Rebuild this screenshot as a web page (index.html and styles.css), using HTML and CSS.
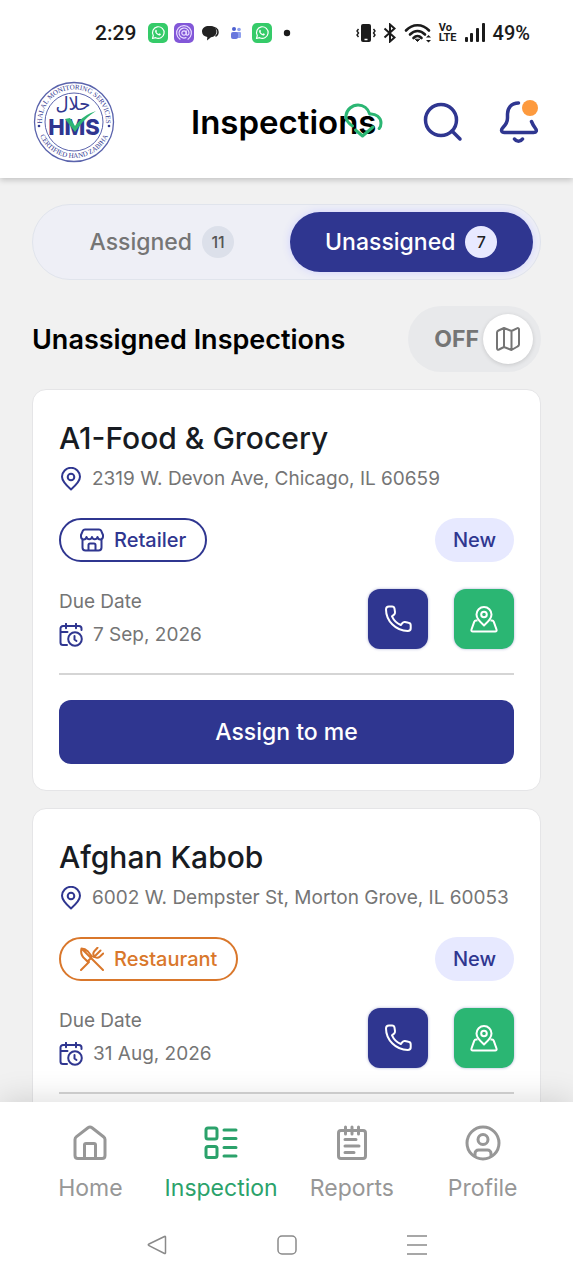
FILE: index.html
```html
<!DOCTYPE html>
<html lang="en">

<head>
    <meta charset="UTF-8" />
    <meta name="viewport" content="width=device-width, initial-scale=1.0" />
    <title>Inspections</title>
    <link rel="stylesheet" href="styles.css">
</head>

<body>
    <!-- Shared icons -->
    <svg class="sprite" aria-hidden="true">
        <symbol id="whatsapp" viewBox="0 0 20 20">
            <rect width="20" height="20" rx="5" fill="#35cb69" />
            <path d="M4.5 15.5l.8-3a5.8 5.8 0 1 1 2.3 2.2z" fill="none" stroke="#fff" stroke-width="1.2" stroke-linejoin="round" />
            <path d="M7.4 7.2c.5-.8 1-.6 1.2 0l.4 1-.6.8c.5 1 1.3 1.7 2.3 2.1l.8-.8 1.3.7c.2 1-.8 1.6-1.7 1.5-2.2-.4-4.1-2.6-4-4.2z" fill="#fff" />
        </symbol>
        <symbol id="pin" viewBox="0 0 24 24">
            <path d="M12 22.5C8 19 3 14.500 3 9.800a9 9 0 0 1 18 0c0 4.700-5 9.200-9 12.700z" />
            <circle cx="12" cy="10" r="3.3" />
        </symbol>
        <symbol id="calendar" viewBox="0 0 24 24">
            <path d="M8 22H4a2.500 2.500 0 0 1-2.500-2.500V5.500A2.500 2.500 0 0 1 4 3h16a2.500 2.500 0 0 1 2.500 2.500V7M1.500 9h7M7 .800v4.500M17 .800v4.500" />
            <circle cx="16" cy="16" r="6.8" />
            <path d="M15.500 13v3.500l2 1.500" />
        </symbol>
        <symbol id="phone" viewBox="0 0 28 28">
            <path d="M2 4.500C2 2.500 3 1.500 5 1.500h3c1.500 0 2.300.800 2.500 2.200l.500 3.500c.200 1.300-.300 2-1.200 2.700L8 11.300c1.800 4 4.800 7 8.800 8.700l1.500-1.800c.700-.900 1.500-1.300 2.700-1.100l3.500.600c1.400.200 2.200 1.100 2.200 2.500v3c0 1.900-1 2.800-3 2.800C12 26 2 16 2 4.500z" />
        </symbol>
        <symbol id="map-pin" viewBox="0 0 28 28">
            <path d="M14 20.500c-3.500-3.200-7.500-6.500-7.500-11a7.500 7.500 0 0 1 15 0c0 4.500-4 7.800-7.500 11z" />
            <circle cx="14" cy="9.5" r="2.8" />
            <path d="M7.500 15.500H6c-1 0-1.500.500-1.800 1.300l-2.700 7.700c-.400 1.200.100 2 1.300 2h22.400c1.200 0 1.700-.800 1.300-2l-2.700-7.700c-.300-.800-.800-1.300-1.800-1.300h-1.500" />
        </symbol>
    </svg>

    <div class="status-bar">
        <div class="status-group">
            <span class="clock">2:29</span>
            <svg class="status-icon" viewBox="0 0 20 20"><use href="#whatsapp" /></svg>
            <svg class="status-icon" viewBox="0 0 20 20">
                <rect width="20" height="20" rx="5" fill="#8257d8" />
                <g fill="none" stroke="#e8dcff" stroke-width="1.2" stroke-linecap="round">
                    <circle cx="10" cy="10" r="2.2" />
                    <path d="M12.200 7.800v3c0 2.200 2.800 1.600 2.800-1A5 5 0 1 0 12 14.600" />
                    <path d="M6 16.200a7.400 7.400 0 1 1 8 0" />
                </g>
            </svg>
            <svg class="status-icon" viewBox="0 0 20 20">
                <path d="M9 3c4.500 0 7.500 2 7.500 5.500S14 14 11 14.200L7 17.500l.300-3.500C4 13.500 2 11.500 2 8.500 2 5 5 3 9 3z" fill="#222" />
                <path d="M11 4c4 0 7 2 7 5 0 2-1 3.500-2.500 4.300" fill="none" stroke="#222" stroke-width="1.5" />
            </svg>
            <svg class="status-icon" viewBox="0 0 20 20">
                <circle cx="8" cy="6" r="2" fill="#4c5fd0" />
                <circle cx="13" cy="6.5" r="1.8" fill="#8fa0ee" />
                <rect x="10" y="9" width="5" height="6" rx="1" fill="#8fa0ee" />
                <rect x="5" y="9" width="7" height="7" rx="2" fill="#6877dd" />
            </svg>
            <svg class="status-icon" viewBox="0 0 20 20"><use href="#whatsapp" /></svg>
            <svg class="status-icon" viewBox="0 0 20 20"><circle cx="9" cy="10" r="3.2" fill="#1b1b1b" /></svg>
        </div>
        <div class="status-group status-system">
            <svg width="20" height="20" viewBox="0 0 20 20">
                <rect x="5" y="1" width="10" height="18" rx="2" fill="#1b1b1b" />
                <path d="M8.500 16.500h3" stroke="#fff" stroke-width="1.5" />
                <path d="M2.500 6L1 8l1.500 2L1 12l1.500 2M17.500 6L19 8l-1.500 2 1.500 2-1.500 2" fill="none" stroke="#1b1b1b" stroke-width="1.4" />
            </svg>
            <svg width="14" height="20" viewBox="0 0 14 20" fill="none" stroke="#1b1b1b" stroke-width="2">
                <path d="M1.500 5.500l10 9L7 18.500v-17l4.500 4-10 9" />
            </svg>
            <svg width="28" height="20" viewBox="0 0 28 20" fill="none" stroke="#1b1b1b" stroke-width="2.6" stroke-linecap="round">
                <path d="M2 7.500C8.500.500 18.500.500 25 7.500M6 11.500c4.500-4.600 10.500-4.600 15 0M9.500 15c2.500-2.600 5.500-2.600 8 0" />
                <path d="M11.500 16.500l2 2 2-2z" fill="#1b1b1b" stroke-width="1" />
                <path d="M22 14.500l2.500-2.500 2.500 2.500zM22 17l2.500 2.500 2.500-2.500z" fill="#1b1b1b" stroke="none" />
            </svg>
            <span class="volte"><span>Vo</span><span>LTE</span></span>
            <svg width="22" height="20" viewBox="0 0 22 20" fill="#1b1b1b">
                <rect x="1" y="14" width="3" height="5" rx="1" />
                <rect x="6" y="10" width="3" height="9" rx="1" />
                <rect x="12" y="5" width="3" height="14" rx="1" />
                <rect x="18" y="0" width="3" height="19" rx="1" />
            </svg>
            <span class="battery">49%</span>
        </div>
    </div>

    <header class="app-header">
        <svg class="logo" viewBox="0 0 82 82" role="img" aria-label="HMS">
            <defs>
                <path id="arc-top" d="M9.500 46A32 32 0 1 1 72.500 46" />
                <path id="arc-bottom" d="M4.500 46A37 37 0 0 0 77.500 46" />
            </defs>
            <g fill="none" stroke="#5a63ac">
                <circle cx="41" cy="41" r="39.5" stroke-width="1.3" />
                <circle cx="41" cy="41" r="29" />
            </g>
            <g class="logo-ring">
                <text><textPath href="#arc-top" startOffset="50%" text-anchor="middle">HALAL MONITORING SERVICES</textPath></text>
                <text><textPath href="#arc-bottom" startOffset="50%" text-anchor="middle">CERTIFIED HAND ZABIHA</textPath></text>
            </g>
            <circle cx="6" cy="45" r="1.3" fill="#30378f" />
            <circle cx="76" cy="45" r="1.3" fill="#30378f" />
            <text class="logo-arabic" x="40" y="29" text-anchor="middle">حلال</text>
            <text class="logo-name" x="41" y="54" text-anchor="middle">HMS</text>
            <path d="M32 38l5-1 5 8c6-8 12-12 21-15-8 5-14 11-21 21z" fill="#2fb574" />
        </svg>
        <h1 class="app-title">Inspections
            <svg class="cloud" viewBox="0 0 40 36">
                <path d="M8.500 23C4 20 1.500 16.500 2 12.500 2.800 6.500 8 2 14 2c5.500 0 10 3.500 11.700 9 6-.800 11.300 3.500 11.300 9 0 2-.500 4-1.800 5.500M11.500 27l7 6L29 24" />
            </svg>
        </h1>
        <div class="header-actions">
            <button class="icon-button" type="button" aria-label="Search">
                <svg viewBox="0 0 40 40">
                    <circle cx="18" cy="18" r="15.5" />
                    <path d="M29 29l8 8" />
                </svg>
            </button>
            <button class="icon-button" type="button" aria-label="Notifications">
                <svg viewBox="0 0 40 40">
                    <path d="M19.500 1C12 1 8.500 6.500 8.500 12v4c0 4-1.500 6.500-4.500 9.500-2.500 2.500-1.500 5 1.500 5h29c3 0 3.500-2 2-4-2-2.500-3-4.500-4-7M15.500 37c2 3 6 3 8 0" />
                </svg>
                <span class="dot"></span>
            </button>
        </div>
    </header>

    <main>
        <div class="tabs" role="tablist">
            <button class="tab" type="button" role="tab" aria-selected="false">Assigned <span class="count">11</span></button>
            <button class="tab active" type="button" role="tab" aria-selected="true">Unassigned <span class="count">7</span></button>
        </div>

        <div class="section-head">
            <h2>Unassigned Inspections</h2>
            <label class="map-toggle">
                <input type="checkbox" role="switch">
                <span>OFF</span>
                <span class="knob">
                    <svg viewBox="0 0 24 24">
                        <path d="M1 5.500C1 4.500 1.500 4 2.500 3.500L8 1l7.500 3L21 1.300c1.200-.500 2 0 2 1.200v15c0 1-.500 1.500-1.500 2L15.500 23 8 20l-5 2.500c-1.200.500-2 0-2-1.200zM8 1v19M15.500 4v19" />
                    </svg>
                </span>
            </label>
        </div>

        <article class="card">
            <h3>A1-Food &amp; Grocery</h3>
            <p class="address"><svg viewBox="0 0 24 24"><use href="#pin" /></svg>2319 W. Devon Ave, Chicago, IL 60659</p>
            <div class="row">
                <span class="type retailer">
                    <svg viewBox="0 0 24 24">
                        <path d="M5 1.500h14c1 0 1.800.500 2.200 1.300L23 7v1.500c0 3.500-4.700 4-5.500.500-.800 3-4.700 3-5.500 0-.800 3-4.700 3-5.500 0C5.700 12.500 1 12 1 8.500V7l1.800-4.200C3.200 2 4 1.500 5 1.500zM2.500 11.500v8c0 2 1 3 3 3h13c2 0 3-1 3-3v-8M8.500 22v-5c0-1 .500-1.500 1.500-1.500h4c1 0 1.500.500 1.500 1.500v5" />
                    </svg>
                    Retailer
                </span>
                <span class="status">New</span>
            </div>
            <div class="row due-row">
                <div class="due">
                    <span>Due Date</span>
                    <span class="date"><svg viewBox="0 0 24 24"><use href="#calendar" /></svg>7 Sep, 2026</span>
                </div>
                <div class="actions">
                    <button class="action call" type="button" aria-label="Call"><svg viewBox="0 0 28 28"><use href="#phone" /></svg></button>
                    <button class="action map" type="button" aria-label="Directions"><svg viewBox="0 0 28 28"><use href="#map-pin" /></svg></button>
                </div>
            </div>
            <button class="assign" type="button">Assign to me</button>
        </article>

        <article class="card">
            <h3>Afghan Kabob</h3>
            <p class="address"><svg viewBox="0 0 24 24"><use href="#pin" /></svg>6002 W. Dempster St, Morton Grove, IL 60053</p>
            <div class="row">
                <span class="type restaurant">
                    <svg viewBox="0 0 24 24">
                        <path d="M23 23L1.500 1.500C.500 5.500 2 9.500 5 12l2.500 2.500L10 12M1.500 1.500c3 0 5 1.500 6.500 3l4 5M9 15l-8 8M14 10l3-3M17.500 .800L14.500 4c-1.500 1.700-1.500 3.500-.500 5M23.200 6.500L20 9.500c-1.700 1.500-3.500 1.500-5 .500M20.500 3.500L16.500 7.500" />
                    </svg>
                    Restaurant
                </span>
                <span class="status">New</span>
            </div>
            <div class="row due-row">
                <div class="due">
                    <span>Due Date</span>
                    <span class="date"><svg viewBox="0 0 24 24"><use href="#calendar" /></svg>31 Aug, 2026</span>
                </div>
                <div class="actions">
                    <button class="action call" type="button" aria-label="Call"><svg viewBox="0 0 28 28"><use href="#phone" /></svg></button>
                    <button class="action map" type="button" aria-label="Directions"><svg viewBox="0 0 28 28"><use href="#map-pin" /></svg></button>
                </div>
            </div>
        </article>
    </main>

    <footer class="bottom">
        <nav class="bottom-nav">
            <a href="#home">
                <svg viewBox="0 0 36 36"><path d="M3 14.500c0-1.200.500-2 1.500-2.800L16 2.700c1.300-1 2.700-1 4 0l11.500 9c1 .800 1.500 1.600 1.500 2.800v16c0 2-1 3-3 3H6c-2 0-3-1-3-3zM12.500 33V20c0-1 .500-1.500 1.500-1.500h8c1 0 1.500.500 1.500 1.500v13" /></svg>
                Home
            </a>
            <a href="#inspection" class="current" aria-current="page">
                <svg viewBox="0 0 36 36"><path d="M5 3h7c1.500 0 2 .500 2 2v7c0 1.500-.500 2-2 2H5c-1.500 0-2-.500-2-2V5c0-1.500.500-2 2-2zM5 21.500h7c1.500 0 2 .500 2 2v7c0 1.500-.500 2-2 2H5c-1.500 0-2-.500-2-2v-7c0-1.500.500-2 2-2zM21 5h12M21 13.500h12M21 22.500h12M21 31h12" /></svg>
                Inspection
            </a>
            <a href="#reports">
                <svg viewBox="0 0 36 36"><path d="M7 5.500h22c1.500 0 2.500 1 2.500 2.500v23c0 1.500-1 2.500-2.500 2.500H7c-1.500 0-2.500-1-2.500-2.500V8c0-1.500 1-2.500 2.500-2.500zM11.500 2v7M18 2v7M24.500 2v7M11 14.500h11M11 21h14M11 27.500h9" /></svg>
                Reports
            </a>
            <a href="#profile">
                <svg viewBox="0 0 36 36"><circle cx="18" cy="18" r="16" /><circle cx="18" cy="14.5" r="5" /><path d="M10 31v-2.500c0-2 1.500-3.500 3.500-3.500h9c2 0 3.500 1.500 3.500 3.500V31" /></svg>
                Profile
            </a>
        </nav>
        <div class="system-nav">
            <button type="button" aria-label="Back"><svg viewBox="0 0 20 20"><path d="M17.500 1.500L2 9c-1 .500-1 1.200 0 1.700l15.500 7.800c.700.300 1 0 1-.700V2c0-.700-.300-.800-1-.500z" /></svg></button>
            <button type="button" aria-label="Home screen"><svg viewBox="0 0 20 20"><rect x="1" y="1" width="18" height="18" rx="4" /></svg></button>
            <button type="button" aria-label="Recent apps"><svg viewBox="0 0 20 20"><path d="M0 1h20M0 10h20M0 19h20" /></svg></button>
        </div>
    </footer>
</body>

</html>
```

FILE: styles.css
```css
:root {
    --base: #f1f1f1;
    --primary: #2f3690;
    --green: #2bb673;
    --orange: #d9772b;
    --muted: #757575;
    --line: #e5e5e7;
}

/* Base Styles */
* {
    box-sizing: border-box;
}

body {
    font-family: Inter, sans-serif;
    background-color: var(--base);
    color: #000;
    margin: 0;
    height: 100vh;
    display: flex;
    flex-direction: column;
    overflow: hidden;
}

h1, h2, h3, p {
    margin: 0;
}

button {
    font-family: inherit;
    border: none;
    padding: 0;
    background: none;
    cursor: pointer;
}

svg {
    flex: none;
    display: block;
}

.sprite {
    position: absolute;
    width: 0;
    height: 0;
}

/* Status bar */
.status-bar {
    flex: none;
    height: 66px;
    padding: 0 43px 0 95px;
    background: #fff;
    color: #1b1b1b;
    font-family: Roboto, sans-serif;
    display: flex;
    align-items: center;
    justify-content: space-between;
    position: relative;
    z-index: 1;
}

.status-group {
    display: flex;
    align-items: center;
    gap: 6px;
}

.status-system {
    gap: 7px;
}

.clock {
    font-size: 21px;
    font-weight: 500;
    margin-right: 6px;
}

.status-icon {
    width: 20px;
    height: 20px;
}

.volte {
    display: flex;
    flex-direction: column;
    font-size: 11px;
    font-weight: 700;
    line-height: 10px;
}

.battery {
    font-size: 20px;
    font-weight: 500;
}

/* Header */
.app-header {
    flex: none;
    height: 112px;
    padding: 0 34px 0 33px;
    background: #fff;
    box-shadow: 0 2px 6px rgba(0, 0, 0, 0.2);
    display: flex;
    align-items: center;
    position: relative;
}

.logo {
    width: 82px;
    height: 82px;
}

.logo-ring {
    font-family: "Liberation Serif", serif;
    font-size: 7px;
    fill: #30378f;
}

.logo-arabic {
    font-family: "DejaVu Sans", sans-serif;
    font-size: 18px;
    fill: #30378f;
}

.logo-name {
    font-size: 22px;
    font-weight: 800;
    fill: #2f3690;
}

.app-title {
    margin-left: 76px;
    font-size: 33px;
    line-height: 48px;
    font-weight: 600;
    position: relative;
}

.cloud {
    position: absolute;
    right: -8px;
    top: 5px;
    width: 40px;
    height: 36px;
    fill: none;
    stroke: var(--green);
    stroke-width: 3;
    stroke-linecap: round;
    stroke-linejoin: round;
}

.header-actions {
    display: flex;
    gap: 36px;
    margin-left: auto;
}

.icon-button {
    position: relative;
    width: 40px;
    height: 40px;
}

.icon-button svg {
    overflow: visible;
    fill: none;
    stroke: var(--primary);
    stroke-width: 3.5;
    stroke-linecap: round;
    stroke-linejoin: round;
}

.dot {
    position: absolute;
    top: -2px;
    right: 1px;
    width: 16px;
    height: 16px;
    border-radius: 50%;
    background: #fd9a3e;
}

/* Content */
main {
    flex: 1;
    min-height: 0;
    padding: 26px 32px 0;
    overflow: hidden;
}

.tabs {
    display: flex;
    gap: 6px;
    height: 76px;
    padding: 7px;
    border: 1px solid #e0e4ec;
    border-radius: 38px;
    background: #eeeff6;
}

.tab {
    flex: 1 1 0;
    display: flex;
    align-items: center;
    justify-content: center;
    gap: 10px;
    border-radius: 30px;
    font-size: 23px;
    font-weight: 500;
    color: var(--muted);
}

.tab.active {
    background: var(--primary);
    color: #fff;
    box-shadow: 0 0 8px #cfd1ff;
}

.count {
    width: 32px;
    height: 32px;
    border-radius: 50%;
    background: #dce0ea;
    color: #555;
    font-size: 16px;
    line-height: 32px;
    text-align: center;
}

.tab.active .count {
    background: #e8e9ff;
    color: #222;
}

.section-head {
    display: flex;
    align-items: center;
    justify-content: space-between;
    margin: 26px 0 17px;
}

.section-head h2 {
    font-size: 27px;
    font-weight: 600;
}

.map-toggle {
    position: relative;
    display: flex;
    align-items: center;
    gap: 4px;
    height: 66px;
    padding: 0 8px 0 26px;
    border-radius: 33px;
    background: #e8e9eb;
    color: var(--muted);
    font-size: 23px;
    font-weight: 700;
}

.map-toggle input {
    position: absolute;
    inset: 0;
    margin: 0;
    width: 100%;
    height: 100%;
    opacity: 0;
}

.knob {
    width: 50px;
    height: 50px;
    border-radius: 50%;
    background: #fff;
    box-shadow: 0 1px 4px rgba(0, 0, 0, 0.15);
    display: flex;
    align-items: center;
    justify-content: center;
}

.knob svg {
    width: 24px;
    height: 24px;
    overflow: visible;
    fill: none;
    stroke: var(--muted);
    stroke-width: 2;
    stroke-linejoin: round;
}

.card {
    padding: 26px;
    margin-bottom: 17px;
    border: 1px solid var(--line);
    border-radius: 14px;
    background: #fff;
}

.card h3 {
    font-size: 30px;
    line-height: 44px;
    font-weight: 500;
    color: #171b22;
}

.address {
    display: flex;
    align-items: center;
    gap: 9px;
    margin: 4px 0 24px;
    font-size: 19px;
    line-height: 30px;
    color: var(--muted);
    white-space: nowrap;
}

.address svg,
.date svg,
.type svg {
    width: 24px;
    height: 24px;
    fill: none;
    stroke: var(--primary);
    stroke-width: 2;
    stroke-linecap: round;
    stroke-linejoin: round;
}

.row {
    display: flex;
    align-items: center;
    justify-content: space-between;
}

.type {
    display: flex;
    align-items: center;
    gap: 10px;
    height: 44px;
    padding: 0 19px;
    border: 2px solid currentColor;
    border-radius: 22px;
    font-size: 20px;
    font-weight: 500;
}

.type svg {
    stroke: currentColor;
}

.retailer {
    color: var(--primary);
}

.restaurant {
    color: var(--orange);
}

.status {
    padding: 0 18px;
    border-radius: 22px;
    background: #e7e9ff;
    color: var(--primary);
    font-size: 20px;
    line-height: 44px;
    font-weight: 500;
}

.due-row {
    margin-top: 26px;
    padding-bottom: 24px;
    border-bottom: 2px solid #d5d5d5;
}

.due {
    display: flex;
    flex-direction: column;
    gap: 5px;
    color: var(--muted);
    font-size: 19px;
    line-height: 28px;
}

.date {
    display: flex;
    align-items: center;
    gap: 10px;
}

.actions {
    display: flex;
    gap: 26px;
}

.action {
    width: 60px;
    height: 60px;
    border-radius: 12px;
    display: flex;
    align-items: center;
    justify-content: center;
    box-shadow: 0 0 3px rgba(47, 54, 144, 0.4);
}

.action svg {
    width: 28px;
    height: 28px;
    fill: none;
    stroke: #fff;
    stroke-width: 2;
    stroke-linejoin: round;
}

.call {
    background: var(--primary);
}

.map {
    background: var(--green);
}

.assign {
    width: 100%;
    height: 64px;
    margin-top: 25px;
    border-radius: 12px;
    background: var(--primary);
    color: #fff;
    font-size: 23px;
    font-weight: 500;
    display: block;
}

/* Bottom navigation */
.bottom {
    flex: none;
    position: relative;
    background: #fff;
    box-shadow: 0 -2px 30px rgba(0, 0, 0, 0.14);
}

.bottom-nav {
    display: flex;
    padding: 23px 25px 0;
}

.bottom-nav a {
    flex: 1 1 0;
    display: flex;
    flex-direction: column;
    align-items: center;
    gap: 12px;
    color: #979797;
    font-size: 23px;
    line-height: 30px;
    text-decoration: none;
}

.bottom-nav svg {
    width: 36px;
    height: 36px;
    fill: none;
    stroke: currentColor;
    stroke-width: 3;
    stroke-linecap: round;
    stroke-linejoin: round;
}

.bottom-nav .current {
    color: #2ba26b;
}

.system-nav {
    display: flex;
    justify-content: center;
    gap: 110px;
    padding: 32px 0 25px;
}

.system-nav button {
    width: 20px;
    height: 20px;
}

.system-nav svg {
    overflow: visible;
    fill: none;
    stroke: #8a8a8a;
    stroke-width: 1.5;
}
```
